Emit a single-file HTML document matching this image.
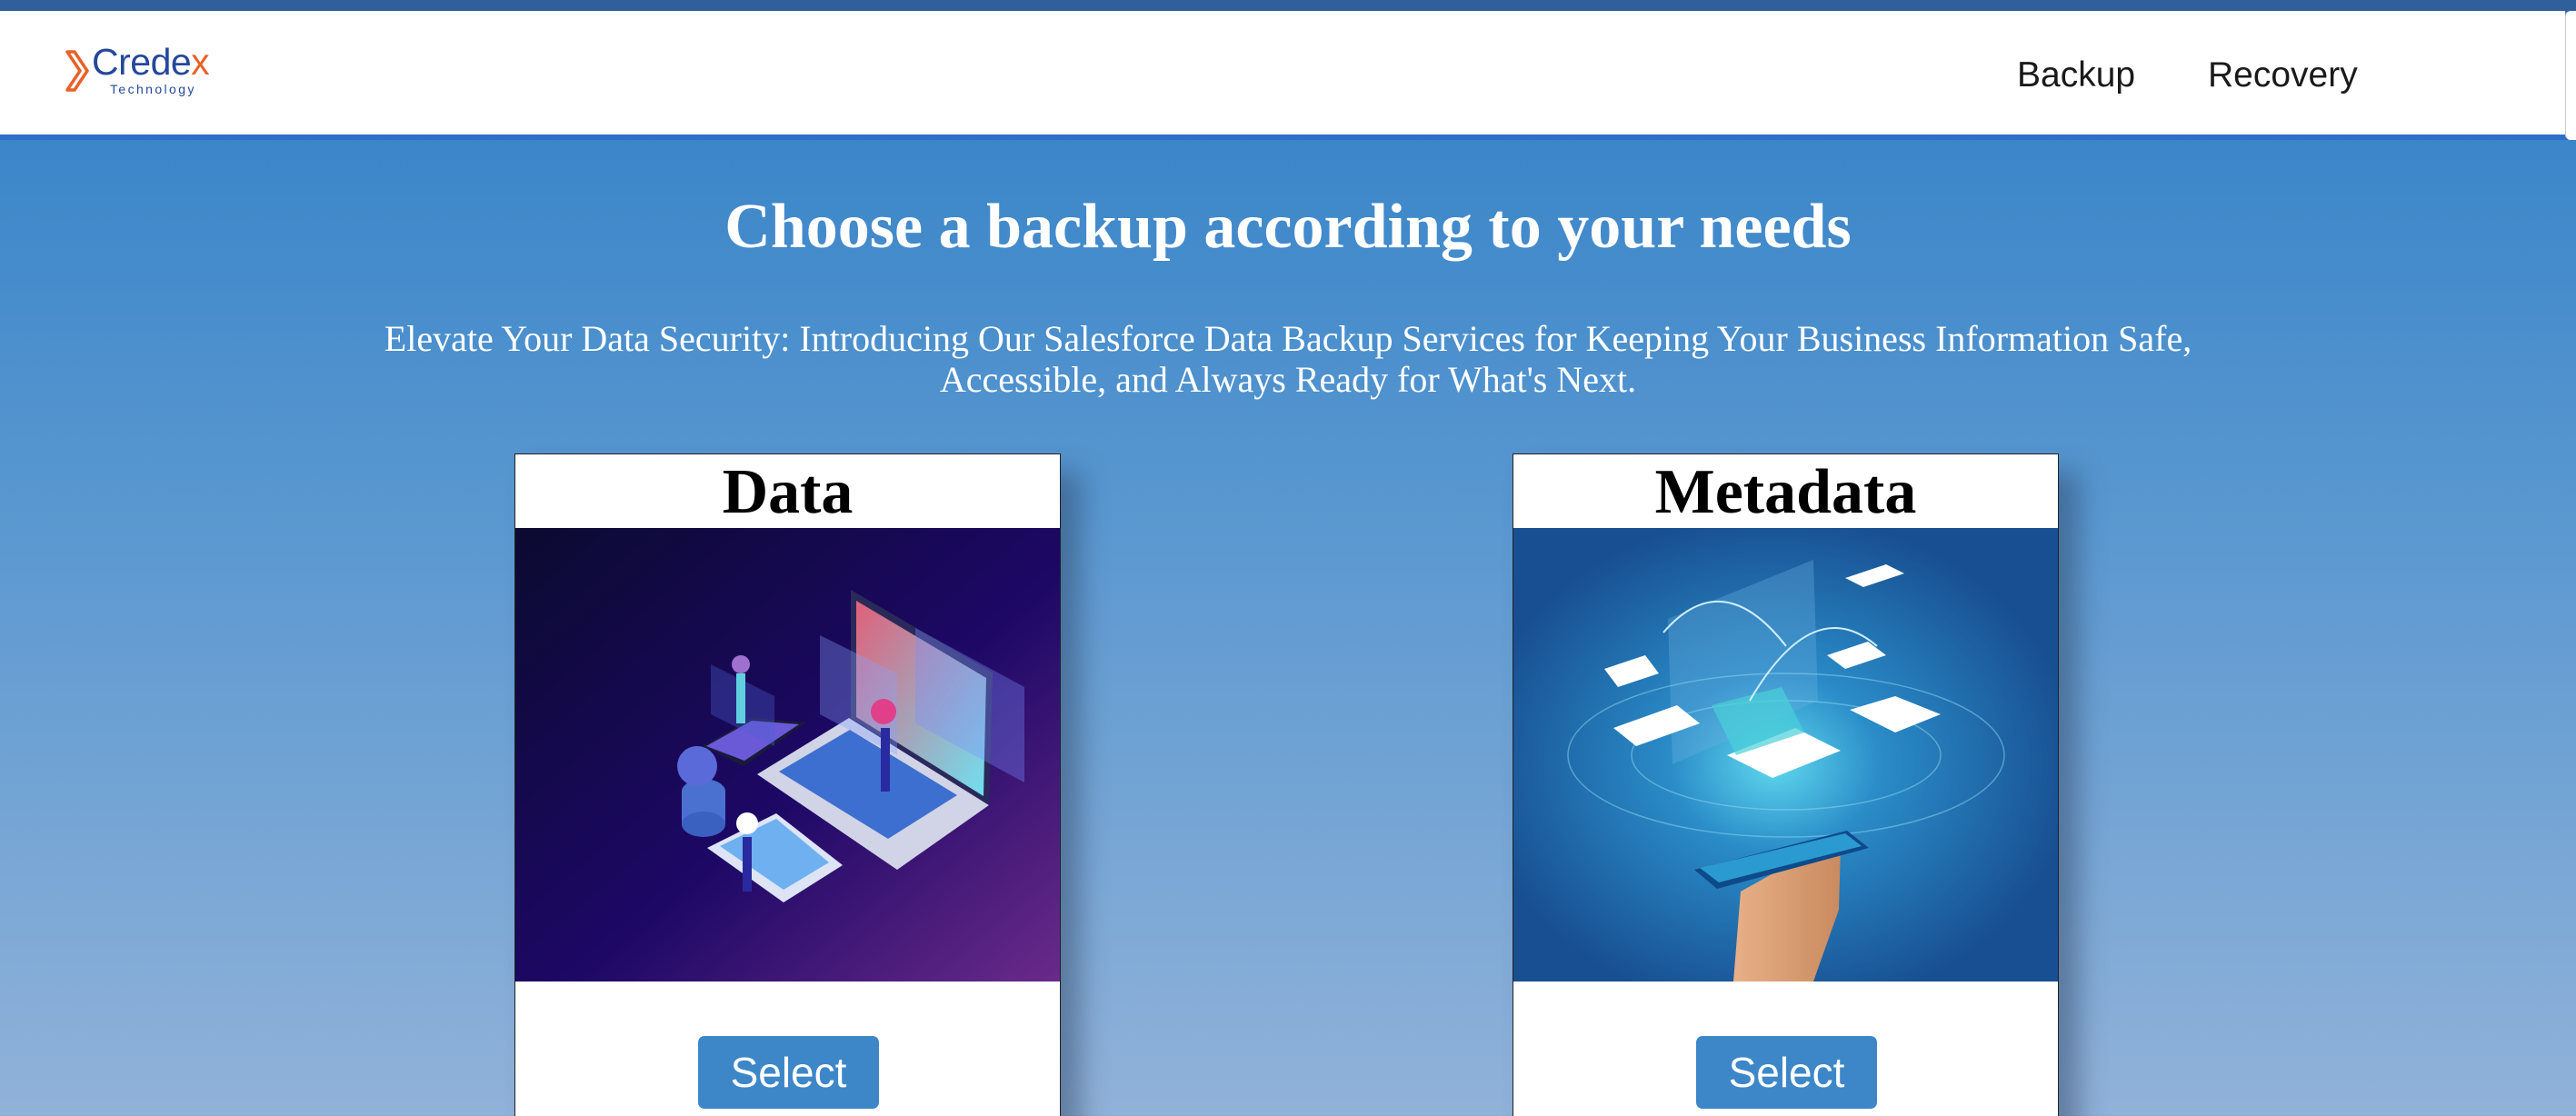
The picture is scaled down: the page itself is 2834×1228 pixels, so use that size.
<!DOCTYPE html>
<html><head><meta charset="utf-8">
<style>
*{margin:0;padding:0;box-sizing:border-box}
html,body{width:2834px;height:1228px;overflow:hidden}
body{position:relative;background:linear-gradient(180deg,#3a86c9 0px,#3b86c9 154px,#5c99d1 600px,#91b2d9 1228px);font-family:"Liberation Serif",serif}
.strip{position:absolute;left:0;top:0;width:2834px;height:13px;background:#30609c}
.hdr{position:absolute;left:0;top:12px;width:2822px;height:136px;background:#fff}
.line{position:absolute;left:0;top:148px;width:2834px;height:6px;background:#2f6fcb}
.nav{position:absolute;top:49px;font-family:"Liberation Sans",sans-serif;font-size:39px;color:#1a1a1a}
h1{position:absolute;left:0;width:2834px;top:205px;text-align:center;color:#fff;font-size:70px;font-weight:bold;line-height:90px}
.sub{position:absolute;left:0;width:2834px;top:350px;text-align:center;color:#fff;font-size:40px;line-height:45px}
.card{position:absolute;top:499px;width:601px;height:760px;background:#fff;border:1px solid #222;box-shadow:22px 20px 28px rgba(40,60,90,.45)}
.card h2{height:81px;line-height:84px;text-align:center;font-size:70px;font-weight:bold;color:#000}
.img{position:absolute;left:0;top:81px;width:599px;height:499px;overflow:hidden}
.btn{position:absolute;left:201px;top:640px;width:199px;height:80px;border-radius:7px;background:#3d87c9;color:#fff;font-family:"Liberation Sans",sans-serif;font-size:46px;text-align:center;line-height:80px}
</style></head><body>
<div class="strip"></div>
<div class="hdr">
 <svg style="position:absolute;left:72px;top:43px" width="30" height="46" viewBox="0 0 30 46"><path d="M2 2 H10 L24 23 L10 44 H2 L16 23 Z" fill="none" stroke="#e8612a" stroke-width="3.5" stroke-linejoin="round"/></svg>
 <div style="position:absolute;left:101px;top:33px;font-family:'Liberation Sans',sans-serif;font-size:41px;color:#25489a;letter-spacing:-0.5px">Crede<span style="color:#e8612a">x</span></div>
 <div style="position:absolute;left:121px;top:78px;font-family:'Liberation Sans',sans-serif;font-size:14px;color:#25489a;letter-spacing:2.4px">Technology</div>
 <div class="nav" style="left:2219px">Backup</div>
 <div class="nav" style="left:2429px">Recovery</div>
</div>
<div class="line"></div>
<h1>Choose a backup according to your needs</h1>
<div class="sub">Elevate Your Data Security: Introducing Our Salesforce Data Backup Services for Keeping Your Business Information Safe,<br>Accessible, and Always Ready for What's Next.</div>

<div class="card" style="left:566px">
 <h2>Data</h2>
 <div class="img">
  <svg width="599" height="499" viewBox="0 0 599 499">
   <defs>
    <linearGradient id="bg1" x1="0" y1="0" x2="1" y2="1"><stop offset="0" stop-color="#0b0a30"/><stop offset=".55" stop-color="#1d0866"/><stop offset="1" stop-color="#6a2a8a"/></linearGradient>
    <linearGradient id="scr" x1="0" y1="0" x2="1" y2="1"><stop offset="0" stop-color="#e0607a"/><stop offset="1" stop-color="#70e0f0"/></linearGradient>
   </defs>
   <rect width="599" height="499" fill="url(#bg1)"/>
   <polygon points="266,271 367,209 521,305 420,376" fill="#d0d4e6"/>
   <polygon points="290,268 368,222 486,294 410,342" fill="#3d6fd0"/>
   <polygon points="369,68 525,159 521,305 369,209" fill="#2a2a5a"/>
   <polygon points="375,80 518,165 515,295 375,208" fill="url(#scr)"/>
   <polygon points="335,118 420,160 420,250 335,205" fill="#8aa0ff" opacity=".35"/>
   <polygon points="440,110 560,175 560,280 440,215" fill="#7a8cff" opacity=".35"/>
   <polygon points="211,352 287,314 360,371 295,412" fill="#dde4f5"/>
   <polygon points="225,350 287,320 345,368 295,398" fill="#6fb0f0"/>
   <polygon points="206,240 260,209 320,214 251,262" fill="#1a1a3a"/>
   <polygon points="210,240 260,212 312,216 252,256" fill="#6a5ad8"/>
   <polygon points="215,150 285,185 285,240 215,205" fill="#4a60d0" opacity=".35"/>
   <ellipse cx="207" cy="290" rx="24" ry="14" fill="#4a70d0"/><rect x="183" y="290" width="48" height="36" fill="#4a70d0"/><ellipse cx="207" cy="326" rx="24" ry="14" fill="#3a60c0"/>
   <ellipse cx="200" cy="262" rx="22" ry="22" fill="#5a6ad8"/>
   <rect x="402" y="220" width="10" height="70" fill="#2a2aa0"/><circle cx="405" cy="202" r="14" fill="#e0408a"/>
   <rect x="250" y="340" width="10" height="60" fill="#2a2aa0"/><circle cx="255" cy="325" r="12" fill="#fff"/>
   <rect x="243" y="160" width="10" height="55" fill="#60d0e0"/><circle cx="248" cy="150" r="10" fill="#a070d0"/>
  </svg>
 </div>
 <div class="btn">Select</div>
</div>

<div class="card" style="left:1664px">
 <h2>Metadata</h2>
 <div class="img">
  <svg width="599" height="499" viewBox="0 0 599 499">
   <defs>
    <radialGradient id="gl" cx=".48" cy=".52" r=".55"><stop offset="0" stop-color="#5fd8ee"/><stop offset=".35" stop-color="#2a8cc8"/><stop offset="1" stop-color="#184f92"/></radialGradient>
    <linearGradient id="hand" x1="0" y1="0" x2="1" y2="0"><stop offset="0" stop-color="#e8b088"/><stop offset="1" stop-color="#c98a5e"/></linearGradient>
   </defs>
   <rect width="599" height="499" fill="url(#gl)"/>
   <polygon points="170,100 330,35 335,190 175,260" fill="#6ab0e0" opacity=".35"/>
   <ellipse cx="300" cy="250" rx="240" ry="90" fill="none" stroke="#8fd8f0" stroke-width="1.5" opacity=".5"/>
   <ellipse cx="300" cy="250" rx="170" ry="60" fill="none" stroke="#8fd8f0" stroke-width="1.5" opacity=".5"/>
   <polygon points="235,250 310,220 360,245 285,275" fill="#fff"/>
   <polygon points="218,195 295,175 320,225 245,250" fill="#4ad0d8" opacity=".7"/>
   <polygon points="110,220 180,195 205,215 135,240" fill="#fff"/>
   <polygon points="100,155 145,140 160,160 115,175" fill="#fff"/>
   <polygon points="345,140 390,125 410,140 365,155" fill="#fff"/>
   <polygon points="370,200 420,185 470,205 420,225" fill="#fff"/>
   <polygon points="365,55 410,40 430,50 385,65" fill="#fff"/>
   <path d="M165 115 Q230 40 300 130 M260 190 Q330 70 400 130" stroke="#cfefff" stroke-width="2" fill="none"/>
   <path d="M242 499 L250 400 L300 372 L360 350 L358 420 L330 499 Z" fill="url(#hand)"/>
   <polygon points="199,376 367,333 391,352 224,397" fill="#0e4a8a"/>
   <polygon points="205,374 365,336 383,350 226,390" fill="#2a9ad0"/>
  </svg>
 </div>
 <div class="btn">Select</div>
</div>
<div style="position:absolute;left:2822px;top:12px;width:12px;height:142px;background:#fff;border-left:1px solid #ccc;border-radius:6px 0 0 6px"></div>
</body></html>
